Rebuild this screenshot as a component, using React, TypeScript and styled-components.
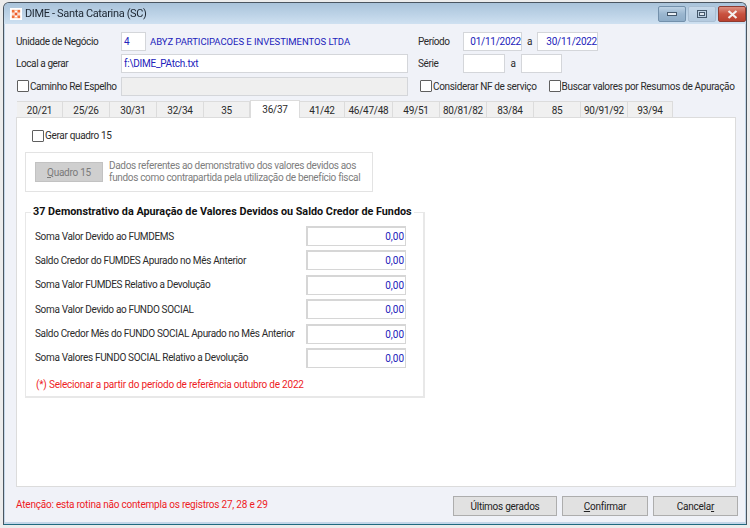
import React from "react";
import styled, { createGlobalStyle } from "styled-components";

const Global = createGlobalStyle`
  html, body { margin: 0; padding: 0; background: #ececec; }
  body { width: 750px; height: 528px; overflow: hidden; font-family: Roboto, "Noto Sans", sans-serif; font-size: 10px; letter-spacing: -0.25px; color: #2b2b2b; }
`;

const Win = styled.div`
  box-sizing: border-box;
  width: 744px;
  height: 523px;
  margin: 2px 0 0 3px;
  display: flex;
  flex-direction: column;
  border: 1px solid #4a5560;
  border-bottom-color: #1f6a80;
  border-radius: 6px 6px 0 0;
  background: #c3d6e8;
  filter: blur(0.3px);
  overflow: hidden;
`;

const TitleBar = styled.div`
  height: 21px;
  flex: none;
  display: flex;
  align-items: center;
  padding: 0 0 0 6px;
  background: linear-gradient(180deg, #a9c3da 0%, #bdd3e7 55%, #cfe1f1 100%);
`;

const AppIcon = styled.svg`
  width: 12px;
  height: 12px;
  flex: none;
  margin-right: 3px;
`;

const Title = styled.div`
  flex: 1;
  font-size: 11px;
  letter-spacing: -0.35px;
  color: #1c2530;
`;

const Captions = styled.div`
  display: flex;
  align-self: flex-start;
  margin-top: 3px;
  gap: 2px;
`;

const CaptionBtn = styled.div<{ $w: number; $close?: boolean; $flat?: boolean }>`
  box-sizing: border-box;
  width: ${(p) => p.$w}px;
  height: 16px;
  display: flex;
  align-items: center;
  justify-content: center;
  border: 1px solid ${(p) => (p.$close ? "#8e3b30" : p.$flat ? "#a9bed2" : "#7390ab")};
  border-radius: 2px;
  background: ${(p) =>
    p.$close
      ? "linear-gradient(180deg,#dc8f80 0%,#c9523f 50%,#b9402f 100%)"
      : p.$flat
      ? "linear-gradient(180deg,#c6d8e9 0%,#b4cadf 100%)"
      : "linear-gradient(180deg,#bdd2e5 0%,#9ab6cf 50%,#8fadc8 100%)"};
`;

const Client = styled.div`
  flex: 1;
  min-height: 0;
  margin: 0 1px 2px 1px;
  padding: 8px 9px 0 11px;
  display: flex;
  flex-direction: column;
  background: #f0f2f8;
  box-sizing: border-box;
`;

const FormRow = styled.div<{ $mb: number; $h?: number }>`
  display: flex;
  align-items: center;
  height: ${(p) => p.$h ?? 18}px;
  margin-bottom: ${(p) => p.$mb}px;
`;

const LeftCell = styled.div`
  width: 402px;
  display: flex;
  align-items: center;
  flex: none;
`;

const Label = styled.span<{ $w?: number }>`
  width: ${(p) => (p.$w ? `${p.$w}px` : "auto")};
  flex: none;
  letter-spacing: -0.4px;
  white-space: nowrap;
`;

const Field = styled.div<{ $w: number; $right?: boolean; $off?: boolean }>`
  box-sizing: border-box;
  width: ${(p) => p.$w}px;
  height: 19px;
  flex: none;
  display: flex;
  align-items: center;
  justify-content: ${(p) => (p.$right ? "flex-end" : "flex-start")};
  padding: 0 ${(p) => (p.$right ? 0 : 2)}px 0 2px;
  border: 1px solid #d4d6da;
  background: ${(p) => (p.$off ? "#efefef" : "#fff")};
  color: #2222bb;
  white-space: nowrap;
`;

const Company = styled.span`
  margin-left: 4px;
  color: #2222bb;
  font-size: 9.5px;
  letter-spacing: -0.05px;
  white-space: nowrap;
`;

const Sep = styled.span<{ $w: number }>`
  width: ${(p) => p.$w}px;
  text-align: center;
  flex: none;
`;

const Check = styled.label<{ $ml?: number }>`
  display: flex;
  align-items: center;
  margin-left: ${(p) => p.$ml ?? 0}px;
  letter-spacing: -0.33px;
  white-space: nowrap;
`;

const Box = styled.span`
  box-sizing: border-box;
  display: block;
  width: 12px;
  height: 12px;
  margin-right: 1px;
  border: 1px solid #5f5f5f;
  border-radius: 1px;
  background: #fff;
  flex: none;
`;

const Tabs = styled.div`
  display: flex;
  align-items: flex-end;
  height: 17px;
  margin-left: 1px;
  flex: none;
  position: relative;
  z-index: 1;
`;

const Tab = styled.div<{ $w: number; $active?: boolean }>`
  box-sizing: border-box;
  width: ${(p) => p.$w}px;
  height: ${(p) => (p.$active ? 18 : 16)}px;
  padding-top: ${(p) => (p.$active ? 0 : 1)}px;
  display: flex;
  align-items: center;
  justify-content: center;
  border: 1px solid #dcdcdc;
  border-left-width: ${(p) => (p.$active ? 1 : 0)}px;
  border-bottom-width: 0;
  background: ${(p) => (p.$active ? "#fff" : "#f0f0f0")};
  margin-bottom: ${(p) => (p.$active ? -1 : 0)}px;
`;

const Panel = styled.div`
  flex: 1;
  min-height: 0;
  box-sizing: border-box;
  border: 1px solid #dcdcdc;
  background: #fff;
  padding: 11px 9px 0 8px;
  display: flex;
  flex-direction: column;
`;

const GerarRow = styled.div`
  display: flex;
  padding-left: 7px;
  height: 13px;
  margin-bottom: 10px;
`;

const InfoBox = styled.div`
  box-sizing: border-box;
  width: 348px;
  height: 40px;
  border: 1px solid #e3e3e3;
  display: flex;
  align-items: center;
  padding-left: 9px;
  margin-bottom: 14px;
`;

const DisabledBtn = styled.div`
  box-sizing: border-box;
  width: 68px;
  height: 20px;
  flex: none;
  background: #cfcfcf;
  border: 1px solid #c2c2c2;
  color: #7a7a7a;
  display: flex;
  align-items: center;
  justify-content: center;
  margin-right: 6px;
  u { text-underline-offset: 1px; }
`;

const InfoText = styled.div`
  color: #7d7d7d;
  line-height: 12px;
  letter-spacing: -0.33px;
  white-space: nowrap;
`;

const Group = styled.fieldset`
  box-sizing: border-box;
  width: 400px;
  height: 192px;
  margin: 0;
  padding: 8px 17px 0 9px;
  border: 2px solid #e8e8e8;
  border-width: 1px 2px 2px 1px;
  min-inline-size: auto;
`;

const GroupLegend = styled.legend`
  font-weight: 700;
  font-size: 10.8px;
  letter-spacing: 0;
  color: #111;
  padding: 0 2px;
  margin-left: -4px;
  line-height: 12px;
  white-space: nowrap;
`;

const ValueRow = styled.div`
  display: flex;
  align-items: center;
  justify-content: space-between;
  height: 20px;
  margin-bottom: 4.4px;
  letter-spacing: -0.33px;
  white-space: nowrap;
`;

const ValueField = styled.div`
  box-sizing: border-box;
  width: 100px;
  height: 20px;
  border: 2px solid #d6d6d6;
  border-width: 2px 1px 1px 2px;
  display: flex;
  align-items: center;
  justify-content: flex-end;
  padding-right: 1px;
  letter-spacing: 0;
  color: #2222bb;
`;

const RedNote = styled.div`
  color: #ee1c25;
  margin: 11px 0 0 1px;
  letter-spacing: -0.2px;
  white-space: nowrap;
`;

const Footer = styled.div`
  flex: none;
  height: 35px;
  padding-top: 3px;
  box-sizing: border-box;
  margin-right: -2px;
  display: flex;
  align-items: center;
`;

const FooterNote = styled.div`
  flex: 1;
  margin-top: -3px;
  letter-spacing: -0.21px;
  color: #ee1c25;
  white-space: nowrap;
`;

const ActionBtn = styled.div<{ $w: number }>`
  box-sizing: border-box;
  width: ${(p) => p.$w}px;
  height: 20px;
  margin-left: 5px;
  display: flex;
  align-items: center;
  justify-content: center;
  background: #e1e1e1;
  border: 1px solid #adadad;
  color: #222;
  u { text-underline-offset: 1px; }
`;

const tabs: [string, number][] = [
  ["20/21", 46], ["25/26", 47], ["30/31", 47], ["32/34", 47], ["35", 46], ["36/37", 50], ["41/42", 45],
  ["46/47/48", 48], ["49/51", 47], ["80/81/82", 47], ["83/84", 47], ["85", 47], ["90/91/92", 47], ["93/94", 45],
];

const rows = [
  "Soma Valor Devido ao FUMDEMS",
  "Saldo Credor do FUMDES Apurado no Mês Anterior",
  "Soma Valor FUMDES Relativo a Devolução",
  "Soma Valor Devido ao FUNDO SOCIAL",
  "Saldo Credor Mês do FUNDO SOCIAL Apurado no Mês Anterior",
  "Soma Valores FUNDO SOCIAL Relativo a Devolução",
];

export default function App() {
  return (
    <>
      <Global />
      <Win>
        <TitleBar>
          <AppIcon viewBox="0 0 13 13">
            <rect width="13" height="13" fill="#fff" />
            <rect x="2" y="2" width="3" height="3" fill="#f0703a" />
            <rect x="8" y="2" width="3" height="3" fill="#f0703a" />
            <rect x="5" y="5" width="3" height="3" fill="#ee5a2a" />
            <rect x="2" y="8" width="3" height="3" fill="#f0703a" />
            <rect x="8" y="8" width="3" height="3" fill="#f0703a" />
            <rect x="5" y="2" width="3" height="1" fill="#f7b48f" />
            <rect x="2" y="6" width="3" height="1" fill="#f7b48f" />
            <rect x="8" y="6" width="3" height="1" fill="#f7b48f" />
            <rect x="5" y="10" width="3" height="1" fill="#f7b48f" />
          </AppIcon>
          <Title>DIME - Santa Catarina (SC)</Title>
          <Captions>
            <CaptionBtn $w={28}>
              <svg width="10" height="4" viewBox="0 0 10 4">
                <rect x="0.5" y="0.5" width="9" height="3" fill="#e8eef4" stroke="#44576a" />
              </svg>
            </CaptionBtn>
            <CaptionBtn $w={28} $flat>
              <svg width="10" height="8" viewBox="0 0 10 8">
                <rect x="0.5" y="0.5" width="9" height="7" fill="none" stroke="#44576a" />
                <rect x="2.5" y="2.5" width="5" height="3" fill="#dfe8f0" stroke="#44576a" />
              </svg>
            </CaptionBtn>
            <CaptionBtn $w={28} $close>
              <svg width="11" height="9" viewBox="0 0 11 9">
                <path d="M1.5 1 L9.5 8 M9.5 1 L1.5 8" stroke="#f4f0ee" strokeWidth="2.2" fill="none" />
              </svg>
            </CaptionBtn>
          </Captions>
        </TitleBar>
        <Client>
          <FormRow $mb={4}>
            <LeftCell>
              <Label $w={105}>Unidade de Negócio</Label>
              <Field $w={25}>4</Field>
              <Company>ABYZ PARTICIPACOES E INVESTIMENTOS LTDA</Company>
            </LeftCell>
            <Label $w={45}>Período</Label>
            <Field $w={59} $right>01/11/2022</Field>
            <Sep $w={15}>a</Sep>
            <Field $w={61} $right>30/11/2022</Field>
          </FormRow>
          <FormRow $mb={5}>
            <LeftCell>
              <Label $w={105}>Local a gerar</Label>
              <Field $w={287}>f:\DIME_PAtch.txt</Field>
            </LeftCell>
            <Label $w={45}>Série</Label>
            <Field $w={42} />
            <Sep $w={16}>a</Sep>
            <Field $w={41} />
          </FormRow>
          <FormRow $mb={5}>
            <LeftCell>
              <Check $ml={1}>
                <Box />
                <Label $w={91}>Caminho Rel Espelho</Label>
              </Check>
              <Field $w={287} $off />
            </LeftCell>
            <Check $ml={2}>
              <Box />
              Considerar NF de serviço
            </Check>
            <Check $ml={12}>
              <Box />
              Buscar valores por Resumos de Apuração
            </Check>
          </FormRow>
          <Tabs>
            {tabs.map(([t, w]) => (
              <Tab key={t} $w={w} $active={t === "36/37"}>{t}</Tab>
            ))}
          </Tabs>
          <Panel>
            <GerarRow>
              <Check>
                <Box />
                Gerar quadro 15
              </Check>
            </GerarRow>
            <InfoBox>
              <DisabledBtn><span><u>Q</u>uadro 15</span></DisabledBtn>
              <InfoText>
                Dados referentes ao demonstrativo dos valores devidos aos
                <br />
                fundos como contrapartida pela utilização de benefício fiscal
              </InfoText>
            </InfoBox>
            <Group>
              <GroupLegend>37 Demonstrativo da Apuração de Valores Devidos ou Saldo Credor de Fundos</GroupLegend>
              {rows.map((r) => (
                <ValueRow key={r}>
                  {r}
                  <ValueField>0,00</ValueField>
                </ValueRow>
              ))}
              <RedNote>(*) Selecionar a partir do período de referência outubro de 2022</RedNote>
            </Group>
          </Panel>
          <Footer>
            <FooterNote>Atenção: esta rotina não contempla os registros 27, 28 e 29</FooterNote>
            <ActionBtn $w={104}>Últimos gerados</ActionBtn>
            <ActionBtn $w={86}><span><u>C</u>onfirmar</span></ActionBtn>
            <ActionBtn $w={85}><span>Cancela<u>r</u></span></ActionBtn>
          </Footer>
        </Client>
      </Win>
    </>
  );
}
